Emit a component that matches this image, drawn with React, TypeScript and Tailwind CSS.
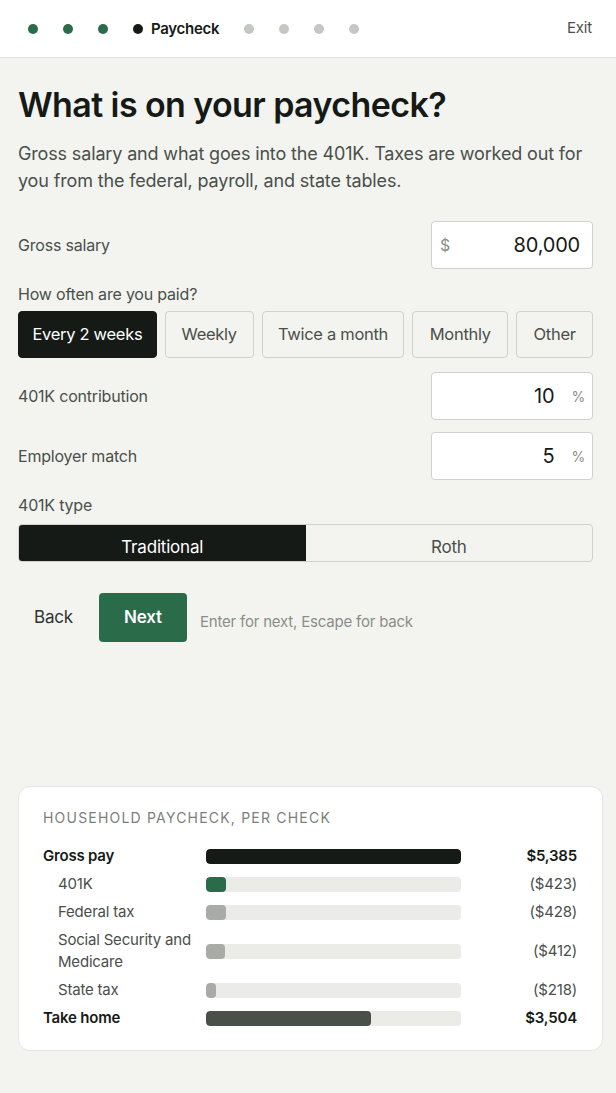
import React from "react";

const font = { fontFamily: "Inter, 'Noto Sans', sans-serif" };

function Dot({ c }: { c: string }) {
  return <span className={`block w-[10px] h-[10px] rounded-full ${c}`} />;
}

const rows = [
  { label: "Gross pay", value: "$5,385", bold: true, fill: 255, color: "bg-[#161a16]" },
  { label: "401K", value: "($423)", fill: 20, color: "bg-[#2a6b4a]" },
  { label: "Federal tax", value: "($428)", fill: 20, color: "bg-[#a8aba6]" },
  { label: "Social Security and Medicare", value: "($412)", fill: 19, color: "bg-[#a8aba6]" },
  { label: "State tax", value: "($218)", fill: 10, color: "bg-[#a8aba6]" },
  { label: "Take home", value: "$3,504", bold: true, fill: 165, color: "bg-[#4a4f4a]" },
];

export default function App() {
  return (
    <div className="min-h-[1093px] bg-[#f3f4f0] text-[#161a16] tracking-[-0.2px]" style={font}>
      <header className="h-[58px] bg-white border-b border-[#e2e3df] flex items-center justify-between pl-[28px] pr-[24px]">
        <div className="flex items-center gap-[25px]">
          <Dot c="bg-[#2a6b4a]" />
          <Dot c="bg-[#2a6b4a]" />
          <Dot c="bg-[#2a6b4a]" />
          <div className="flex items-center gap-[8px]">
            <Dot c="bg-[#161a16]" />
            <span className="text-[15px] font-semibold leading-none tracking-[-0.3px]">Paycheck</span>
          </div>
          <Dot c="bg-[#c4c7c2]" />
          <Dot c="bg-[#c4c7c2]" />
          <Dot c="bg-[#c4c7c2]" />
          <Dot c="bg-[#c4c7c2]" />
        </div>
        <span className="text-[15px] text-[#4a4f4a]">Exit</span>
      </header>

      <main className="pl-[18px] pr-[23px]">
        <h1 className="pt-[27px] text-[34px] leading-[40px] font-semibold tracking-[-0.6px]">
          What is on your paycheck?
        </h1>
        <p className="mt-[15px] text-[18px] leading-[27px] text-[#4a4f4a] tracking-[-0.15px]">
          Gross salary and what goes into the 401K. Taxes are worked out for you from the federal, payroll, and state tables.
        </p>

        <div className="mt-[27px] flex items-center justify-between">
          <span className="text-[16px] text-[#4a4f4a]">Gross salary</span>
          <div className="w-[162px] h-[48px] bg-white border border-[#cfd1cc] rounded-[4px] flex items-center justify-between pl-[8px] pr-[12px]">
            <span className="text-[16px] text-[#8a8e8a]">$</span>
            <span className="text-[20px]">80,000</span>
          </div>
        </div>

        <div className="mt-[13px] text-[16px] leading-[24px] text-[#4a4f4a]">How often are you paid?</div>
        <div className="mt-[5px] flex gap-[8px]">
          {[
            ["Every 2 weeks", "w-[139px]", true],
            ["Weekly", "w-[89px]", false],
            ["Twice a month", "w-[143px]", false],
            ["Monthly", "w-[96px]", false],
            ["Other", "w-[77px]", false],
          ].map(([t, w, sel]) => (
            <button
              key={t as string}
              className={`${w} h-[47px] rounded-[4px] border text-[16.5px] tracking-[-0.3px] ${
                sel ? "bg-[#161a16] border-[#161a16] text-white" : "border-[#cfd1cc] text-[#4a4f4a]"
              }`}
            >
              {t as string}
            </button>
          ))}
        </div>

        <div className="mt-[14px] flex items-center justify-between">
          <span className="text-[16px] text-[#4a4f4a]">401K contribution</span>
          <div className="w-[162px] h-[48px] bg-white border border-[#cfd1cc] rounded-[4px] flex items-center justify-end pr-[7px]">
            <span className="text-[20px]">10</span>
            <span className="ml-[17px] text-[14px] text-[#8a8e8a]">%</span>
          </div>
        </div>
        <div className="mt-[12px] flex items-center justify-between">
          <span className="text-[16px] text-[#4a4f4a]">Employer match</span>
          <div className="w-[162px] h-[48px] bg-white border border-[#cfd1cc] rounded-[4px] flex items-center justify-end pr-[7px]">
            <span className="text-[20px]">5</span>
            <span className="ml-[17px] text-[14px] text-[#8a8e8a]">%</span>
          </div>
        </div>

        <div className="mt-[13px] text-[16px] leading-[24px] text-[#4a4f4a]">401K type</div>
        <div className="mt-[7px] h-[38px] flex border border-[#cfd1cc] rounded-[4px] overflow-hidden">
          <div className="flex-1 bg-[#161a16] text-white text-[17px] flex items-center justify-center pt-[10px]">Traditional</div>
          <div className="flex-1 text-[#4a4f4a] text-[17px] flex items-center justify-center pt-[10px]">Roth</div>
        </div>

        <div className="mt-[31px] flex items-center">
          <button className="px-[16px] h-[49px] text-[17px] text-[#2e332e]">Back</button>
          <button className="ml-[10px] w-[88px] h-[49px] rounded-[4px] bg-[#2a6b4a] text-white text-[17px] font-semibold">Next</button>
          <span className="ml-[13px] mt-[10px] text-[15px] text-[#8a8e8a]">Enter for next, Escape for back</span>
        </div>

        <section className="mt-[144px] w-[585px] bg-white border border-[#e4e5e1] rounded-[12px] pt-[22px] pb-[18px] pl-[24px] pr-[25px]">
          <h2 className="text-[14px] leading-[18px] tracking-[1.2px] text-[#7a7f7a] uppercase">
            Household paycheck, per check
          </h2>
          <div className="mt-[15px]">
            {rows.map((r) => (
              <div key={r.label} className="grid grid-cols-[163px_255px_1fr] items-center py-[3px]">
                <span
                  className={`text-[15px] leading-[22px] ${
                    r.bold ? "font-semibold text-[#161a16]" : "pl-[15px] pr-[8px] text-[#4a4f4a]"
                  }`}
                >
                  {r.label}
                </span>
                <div className="h-[15px] rounded-[4px] bg-[#ebece8] overflow-hidden">
                  <div className={`h-full rounded-[4px] ${r.color}`} style={{ width: r.fill }} />
                </div>
                <span
                  className={`text-right text-[15px] leading-[22px] ${
                    r.bold ? "font-semibold text-[#161a16]" : "text-[#4a4f4a]"
                  }`}
                >
                  {r.value}
                </span>
              </div>
            ))}
          </div>
        </section>
      </main>
    </div>
  );
}
